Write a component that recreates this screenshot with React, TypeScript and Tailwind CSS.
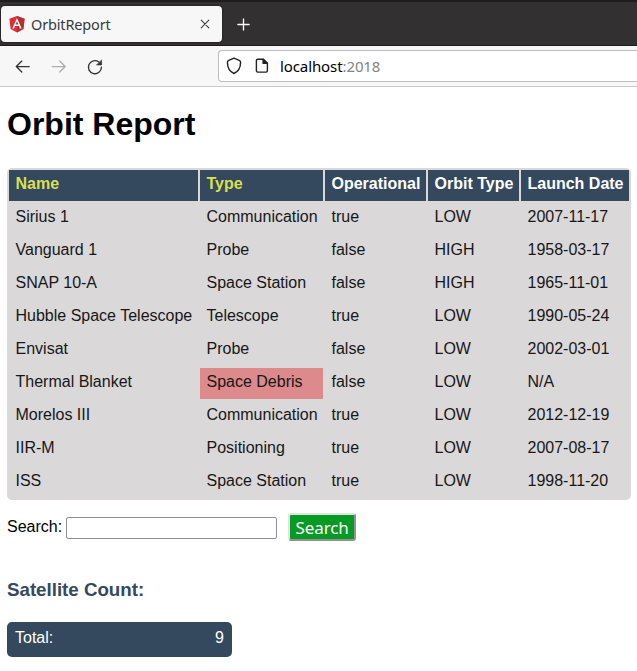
import React from "react";

const satellites = [
  ["Sirius 1", "Communication", "true", "LOW", "2007-11-17"],
  ["Vanguard 1", "Probe", "false", "HIGH", "1958-03-17"],
  ["SNAP 10-A", "Space Station", "false", "HIGH", "1965-11-01"],
  ["Hubble Space Telescope", "Telescope", "true", "LOW", "1990-05-24"],
  ["Envisat", "Probe", "false", "LOW", "2002-03-01"],
  ["Thermal Blanket", "Space Debris", "false", "LOW", "N/A"],
  ["Morelos III", "Communication", "true", "LOW", "2012-12-19"],
  ["IIR-M", "Positioning", "true", "LOW", "2007-08-17"],
  ["ISS", "Space Station", "true", "LOW", "1998-11-20"],
];

const headers = ["Name", "Type", "Operational", "Orbit Type", "Launch Date"];

function AngularLogo() {
  return (
    <svg width="16" height="17" viewBox="0 0 16 17" className="ml-[8px] shrink-0">
      <path d="M8 0 15.6 2.8 14.4 13 8 16.6 1.6 13 .4 2.8Z" fill="#dd2d35" />
      <path d="M8 0 15.6 2.8 14.4 13 8 16.6Z" fill="#b52e31" />
      <path d="M8 1.9 3.3 12.4H5.1L6 10.1H10L10.9 12.4H12.7ZM8 5.3 9.4 8.6H6.6Z" fill="#fff" fillRule="evenodd" />
    </svg>
  );
}

function TabStrip() {
  return (
    <div className="flex h-[46px] items-start border-t-2 border-b border-t-[#1e1c1d] border-b-[#1c1b1c] bg-[#333031] pt-1 pl-px">
      <div className="flex h-[36px] w-[221px] items-center rounded-[4px] bg-[#f7f7f7] shadow-[0_0_2px_#111]">
        <AngularLogo />
        <span className="ml-[6px] w-[90px] origin-left font-['Noto_Sans',sans-serif] text-[14.5px] tracking-[-0.15px] text-[#3a3a3a]">OrbitReport</span>
        <svg width="10" height="10" viewBox="0 0 10 10" className="ml-[79px]" stroke="#3c3c3c" strokeWidth="1.1" strokeLinecap="round">
          <path d="M1.2 1.2 8.8 8.8M8.8 1.2 1.2 8.8" />
        </svg>
      </div>
      <svg width="14" height="14" viewBox="0 0 14 14" className="mt-[12px] ml-[15px]" stroke="#fafafa" strokeWidth="1.4" strokeLinecap="round">
        <path d="M6.5 .9V12.1M.9 6.5H12.1" />
      </svg>
    </div>
  );
}

function Toolbar() {
  return (
    <div className="flex h-[41px] items-start border-b border-[#c9c9c9] bg-[#f7f7f7] pt-[4px]">
      <svg width="96" height="16" viewBox="0 0 96 16" className="mt-[9px] ml-[15px] shrink-0" fill="none" strokeWidth="1.35" strokeLinecap="round" strokeLinejoin="round">
        <path d="M14.2 7.6H1.5M6.8 2.1 1.3 7.6 6.8 13.1" stroke="#333" />
        <path d="M37.3 7.6H50M44.7 2.1 50.2 7.6 44.7 13.1" stroke="#adadad" />
        <path d="M86.4 8.2A6.5 6.5 0 1 1 83.8 3" stroke="#333" />
        <path d="M86.6 1.2V6H81.8Z" fill="#333" stroke="#333" strokeWidth=".6" />
      </svg>
      <div className="ml-[107px] flex h-[32px] w-[425px] shrink-0 items-center rounded-l-[4px] border border-r-0 border-[#bebebe] bg-white">
        <svg width="16" height="18" viewBox="0 0 16 18" className="ml-[7px]" fill="none" stroke="#222" strokeWidth="1.4" strokeLinejoin="round">
          <path d="M8 1.2 13.2 3.3Q14.6 3.9 14.6 5.3C14.6 10 13 14.3 8 16.5 3 14.3 1.4 10 1.4 5.3Q1.4 3.9 2.8 3.3Z" />
        </svg>
        <svg width="14" height="16" viewBox="0 0 14 16" className="ml-[13px]" fill="none" stroke="#222" strokeWidth="1.4" strokeLinejoin="round">
          <path d="M3 1.2H8.4L12.4 5.2V12.8Q12.4 14.1 11.1 14.1H2.7Q1.4 14.1 1.4 12.8V2.5Q1.4 1.2 2.7 1.2Z" />
          <path d="M8.1 1.2V5.4H12.4Z" fill="#222" />
        </svg>
        <span className="ml-[11px] font-['Noto_Sans',sans-serif] text-[15px] tracking-[-0.1px] text-black">
          localhost<span className="text-[#858585]">:2018</span>
        </span>
      </div>
    </div>
  );
}

export default function App() {
  return (
    <div className="h-[671px] w-[637px] overflow-hidden bg-white font-['Liberation_Sans',Arial,sans-serif] text-[16px] leading-[18px] text-black">
      <TabStrip />
      <Toolbar />
      <main className="pl-[7px]">
        <h1 className="pt-[19px] text-[32px] leading-[37px] font-bold">Orbit Report</h1>
        <table className="mt-[25px] w-[624px] table-fixed border-separate border-spacing-[2px] rounded-[5px] bg-[#dad8d9] text-left text-[#171717]">
          <colgroup>
            <col className="w-[189px]" />
            <col className="w-[123px]" />
            <col className="w-[101px]" />
            <col className="w-[91px]" />
            <col className="w-[108px]" />
          </colgroup>
          <thead>
            <tr className="h-[31px]">
              {headers.map((header, i) => (
                <th key={header} className={`bg-[#34495e] p-0 pb-[4px] pl-[6.5px] font-bold whitespace-nowrap ${i < 2 ? "text-[#dbdf52]" : "text-white"}`}>
                  {header}
                </th>
              ))}
            </tr>
          </thead>
          <tbody>
            {satellites.map((row) => (
              <tr key={row[0]} className="h-[31px]">
                {row.map((value, i) => (
                  <td key={i} className={`p-0 pb-[4px] pl-[6.5px] whitespace-nowrap ${value === "Space Debris" ? "bg-[#dc8a8b]" : ""}`}>
                    {value}
                  </td>
                ))}
              </tr>
            ))}
          </tbody>
        </table>
        <div className="mt-[13px] flex h-[28px] items-center">
          <label htmlFor="search">Search:</label>
          <input id="search" className="mt-[2px] ml-[4px] h-[22px] w-[211px] rounded-[2px] border border-[#8f8f9d] bg-white" />
          <button className="ml-[11px] h-[28px] w-[68px] rounded-[3px] border-2 border-t-[#e3e3e3] border-r-[#939393] border-b-[#939393] border-l-[#e3e3e3] bg-[#079b25] p-0 font-['Noto_Sans',sans-serif] text-[17px] leading-[23px] tracking-[-0.1px] text-white">
            Search
          </button>
        </div>
        <h3 className="mt-[38px] text-[18.72px] leading-[22px] font-bold text-[#34495e]">Satellite Count:</h3>
        <div className="mt-[21px] flex h-[35px] w-[225px] items-center justify-between rounded-[5px] bg-[#34495e] px-[8px] pb-[4px] text-white">
          <span>Total:</span>
          <span>9</span>
        </div>
      </main>
    </div>
  );
}
